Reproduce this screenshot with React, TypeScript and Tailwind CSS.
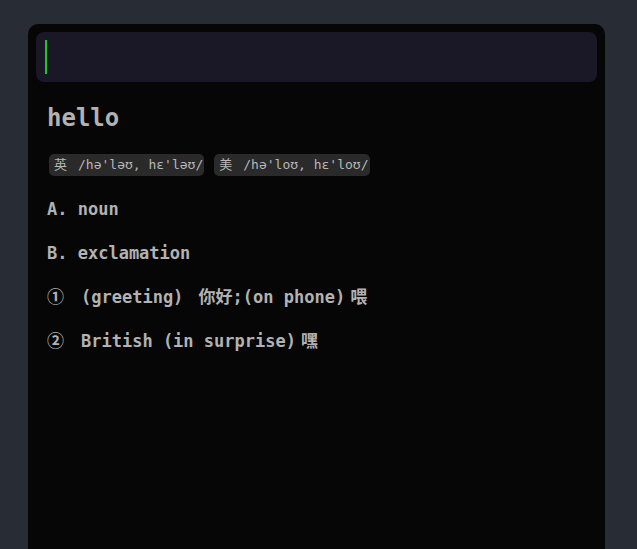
const mono = "font-['DejaVu_Sans_Mono','Noto_Sans_CJK_SC',monospace]";

const phonetics = [
  { label: "英", ipa: "/hə'ləʊ, hɛ'ləʊ/" },
  { label: "美", ipa: "/hə'loʊ, hɛ'loʊ/" },
];

type Segment = { text: string; cn?: boolean };

const senses: { marker: string; parts: Segment[] }[] = [
  {
    marker: "①",
    parts: [
      { text: "(greeting) " },
      { text: "你好", cn: true },
      { text: ";(on phone)" },
      { text: "喂", cn: true },
    ],
  },
  {
    marker: "②",
    parts: [{ text: "British (in surprise)" }, { text: "嘿", cn: true }],
  },
];

export default function App() {
  return (
    <div className={`h-[549px] overflow-hidden bg-[#282c34] px-[28px] pt-[24px] ${mono}`}>
      <div className="h-[600px] w-[577px] rounded-[10px] bg-[#060606] p-[8px]">
        <div className="flex h-[50px] items-center rounded-[8px] bg-[#1a1826] px-[9px]">
          <div className="h-[34px] w-[2px] bg-[#22c322]" />
        </div>
        <div className="px-[11px] pt-[18px] text-[#b2b2b2]">
          <h1 className="text-[24px] font-bold leading-[36px]">hello</h1>
          <div className="mt-[18px] flex gap-[10px] pl-[2px]">
            {phonetics.map(({ label, ipa }) => (
              <span
                key={label}
                className="flex h-[22px] items-center gap-[11px] whitespace-pre rounded-[5px] bg-[#2a2a2a] pl-[5px] pr-[1px] text-[13px] text-[#b8b8b8]"
              >
                <span>{label}</span>
                <span>{ipa}</span>
              </span>
            ))}
          </div>
          <div className="mt-[21px] flex flex-col gap-[20px] text-[17px] font-bold leading-[24px]">
            <p>A. noun</p>
            <p>B. exclamation</p>
            {senses.map(({ marker, parts }) => (
              <p key={marker} className="flex whitespace-pre">
                <span className="w-[34px] shrink-0">{marker}</span>
                {parts.map((p, i) => (
                  <span key={i} className={p.cn ? "ml-[5px]" : ""}>
                    {p.text}
                  </span>
                ))}
              </p>
            ))}
          </div>
        </div>
      </div>
    </div>
  );
}
